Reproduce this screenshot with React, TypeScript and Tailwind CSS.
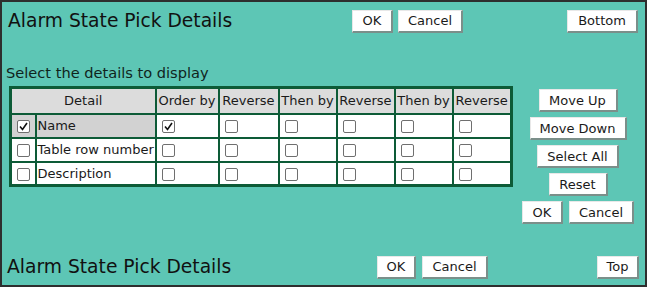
import React from "react";

const font = { fontFamily: '"DejaVu Sans", Verdana, sans-serif' };

function Btn({ label, className = "" }: { label: string; className?: string }) {
  return (
    <button
      type="button"
      className={
        "h-[23px] whitespace-nowrap bg-white px-[4px] text-[13px] leading-none text-[#1a1a1a] border-t border-l border-[#e8e8e8] border-r-2 border-b-2 border-r-[#7b8f8a] border-b-[#7b8f8a] " +
        className
      }
    >
      {label}
    </button>
  );
}

function Box({ checked = false }: { checked?: boolean }) {
  return (
    <span className="inline-flex h-[13px] w-[13px] items-center justify-center rounded-[2px] border border-[#6f6f6f] bg-white align-middle">
      {checked && (
        <svg width="11" height="11" viewBox="0 0 11 11">
          <path d="M2 5.5 L4.5 8.5 L9 2" fill="none" stroke="#111" strokeWidth="1.6" />
        </svg>
      )}
    </span>
  );
}

const rows = [
  { name: "Name", picked: true, order: true },
  { name: "Table row number", picked: false, order: false },
  { name: "Description", picked: false, order: false },
];

const sortCols = ["Order by", "Reverse", "Then by", "Reverse", "Then by", "Reverse"];
const widths = ["w-[63px]", "w-[60px]", "w-[58px]", "w-[58px]", "w-[58px]", "w-[59px]"];

export default function App() {
  return (
    <div
      style={font}
      className="flex h-[287px] w-[647px] flex-col border-2 border-[#2e2e2e] bg-[#5dc6b5] text-[#111]"
    >
      <div className="mt-[7px] flex h-[24px] items-center">
        <div className="w-[350px] whitespace-nowrap pl-[6px] text-[18.7px] leading-none">Alarm State Pick Details</div>
        <div className="flex gap-[5px]">
          <Btn label="OK" className="w-[41px]" />
          <Btn label="Cancel" className="w-[65px]" />
        </div>
        <Btn label="Bottom" className="ml-auto mr-[7px] w-[71px]" />
      </div>

      <div className="mt-[31px] whitespace-nowrap pl-[4px] text-[14.6px] leading-[18px] text-[#10241c]">
        Select the details to display
      </div>

      <div className="mt-[4px] flex items-start">
        <table className="ml-[7px] table-fixed border-collapse border-[3px] border-[#0d5b37] text-[13px] text-[#1a1a1a]">
          <thead>
            <tr className="h-[26px] bg-[#dcdcdc]">
              <th colSpan={2} className="w-[145px] border-2 border-[#0d5b37] p-0 text-center font-normal">
                Detail
              </th>
              {sortCols.map((c, i) => (
                <th key={i} className={"whitespace-nowrap border-2 border-[#0d5b37] p-0 text-center font-normal " + widths[i]}>
                  {c}
                </th>
              ))}
            </tr>
          </thead>
          <tbody>
            {rows.map((r) => (
              <tr key={r.name} className="h-[24px]">
                <td className={"w-[25px] border-2 border-[#0d5b37] text-center " + (r.picked ? "bg-[#d2d2d2]" : "bg-white")}>
                  <Box checked={r.picked} />
                </td>
                <td className={"w-[120px] whitespace-nowrap border-2 border-[#0d5b37] pl-[1px] " + (r.picked ? "bg-[#d2d2d2]" : "bg-white")}>
                  {r.name}
                </td>
                {sortCols.map((_, i) => (
                  <td key={i} className="border-2 border-[#0d5b37] bg-white pl-[5px]">
                    <Box checked={i === 0 && r.order} />
                  </td>
                ))}
              </tr>
            ))}
          </tbody>
        </table>

        <div className="mt-[3px] flex flex-1 flex-col items-center gap-[5px] pr-[2px]">
          <Btn label="Move Up" className="w-[79px]" />
          <Btn label="Move Down" className="w-[97px]" />
          <Btn label="Select All" className="w-[82px]" />
          <Btn label="Reset" className="w-[59px]" />
          <div className="flex gap-[6px]">
            <Btn label="OK" className="w-[41px]" />
            <Btn label="Cancel" className="w-[65px]" />
          </div>
        </div>
      </div>

      <div className="mt-auto mb-[6px] flex h-[24px] items-center">
        <div className="w-[375px] whitespace-nowrap pl-[5px] text-[18.7px] leading-none">Alarm State Pick Details</div>
        <div className="flex gap-[6px]">
          <Btn label="OK" className="w-[39px]" />
          <Btn label="Cancel" className="w-[66px]" />
        </div>
        <Btn label="Top" className="ml-auto mr-[6px] w-[42px]" />
      </div>
    </div>
  );
}
